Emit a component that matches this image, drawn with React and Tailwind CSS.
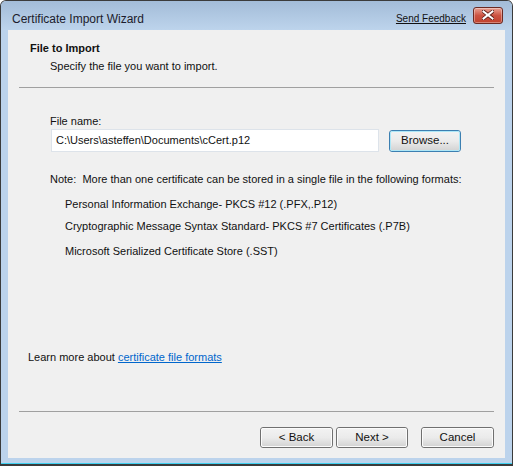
const font = { fontFamily: '"Liberation Sans", Arial, sans-serif' };

const WinButton = ({ children, focused = false, className = "" }) => (
  <div
    className={`flex items-center justify-center rounded-[3px] border ${
      focused ? "border-[#3c7fb1]" : "border-[#707070]"
    } ${className}`}
  >
    <div
      className={`flex h-full w-full items-center justify-center rounded-[2px] border ${
        focused ? "border-[#aee7f7]" : "border-[#fbfbfb]"
      } bg-gradient-to-b from-[#f2f2f2] via-[#ebebeb] to-[#d5d5d5] text-[11.5px] text-[#111]`}
    >
      {children}
    </div>
  </div>
);

const Separator = () => (
  <div className="mx-[11px] h-[1px] bg-[#a0a0a0]" />
);

export default function App() {
  return (
    <div
      className="flex h-[466px] w-[513px] flex-col overflow-hidden rounded-t-[6px] border-x border-t border-b-2 border-[#3b3b3b] bg-[#bcd3ec]"
      style={font}
    >
      {/* title bar */}
      <div className="flex h-[29px] shrink-0 items-center bg-gradient-to-b from-[#a3bcd8] to-[#bdd4ec] pl-[11px] pr-[9px]">
        <span className="mt-[6px] text-[12px] text-[#1c1c2c]">
          Certificate Import Wizard
        </span>
        <span className="ml-auto mt-[5px] text-[10px] text-[#111] underline">
          Send Feedback
        </span>
        <div className="ml-[7px] mt-[-1px] flex h-[17px] w-[30px] items-center justify-center rounded-[3px] border border-[#6b2a23] bg-gradient-to-b from-[#e7a194] via-[#cc5342] to-[#c0412d] shadow-[inset_0_0_0_1px_rgba(255,255,255,0.35)]">
          <svg width="12" height="10" viewBox="0 0 12 10">
            <path
              d="M1.5 1.5 L10.5 8.5 M10.5 1.5 L1.5 8.5"
              stroke="#5a1d16"
              strokeWidth="3.6"
              strokeLinecap="square"
            />
            <path
              d="M1.5 1.5 L10.5 8.5 M10.5 1.5 L1.5 8.5"
              stroke="#ffffff"
              strokeWidth="2"
              strokeLinecap="square"
            />
          </svg>
        </div>
      </div>

      {/* client area */}
      <div className="mx-[7px] flex h-[428px] shrink-0 flex-col bg-[#f0f0f0] text-[11px] text-[#111]">
        {/* header */}
        <div className="pl-[22px] pt-[10px]">
          <div className="font-bold leading-[16px]">File to Import</div>
          <div className="mt-[2px] pl-[20px] leading-[16px]">
            Specify the file you want to import.
          </div>
        </div>
        <div className="mt-[13px]">
          <Separator />
        </div>

        {/* body */}
        <div className="pl-[42px] pt-[25px]">
          <div className="leading-[16px]">File name:</div>
          <div className="flex items-center">
            <div className="ml-[1px] flex h-[23px] w-[328px] items-center border border-[#dde3ea] bg-white pl-[4px]">
              C:\Users\asteffen\Documents\cCert.p12
            </div>
            <WinButton focused className="ml-[10px] mt-[1px] h-[22px] w-[72px]">
              Browse...
            </WinButton>
          </div>

          <div className="mt-[19px] leading-[16px]">
            Note:&nbsp; More than one certificate can be stored in a single
            file in the following formats:
          </div>
          <div className="pl-[15px]">
            <div className="mt-[9px] leading-[16px]">
              Personal Information Exchange- PKCS #12 (.PFX,.P12)
            </div>
            <div className="mt-[6px] leading-[16px]">
              Cryptographic Message Syntax Standard- PKCS #7 Certificates (.P7B)
            </div>
            <div className="mt-[9px] leading-[16px]">
              Microsoft Serialized Certificate Store (.SST)
            </div>
          </div>
        </div>

        <div className="mt-auto pl-[20px] leading-[16px]">
          Learn more about{" "}
          <span className="text-[#0066cc] underline">
            certificate file formats
          </span>
        </div>

        <div className="mt-[46px]">
          <Separator />
        </div>

        {/* footer buttons */}
        <div className="flex justify-end pr-[11px] pt-[15px] pb-[10px]">
          <WinButton className="h-[21px] w-[73px]">&lt; Back</WinButton>
          <WinButton className="ml-[3px] h-[21px] w-[72px]">Next &gt;</WinButton>
          <WinButton className="ml-[13px] h-[21px] w-[73px]">Cancel</WinButton>
        </div>
      </div>

      <div className="h-[5px] shrink-0" />
      <div className="h-[1px] shrink-0 bg-[#3fd0f0]" />
    </div>
  );
}
